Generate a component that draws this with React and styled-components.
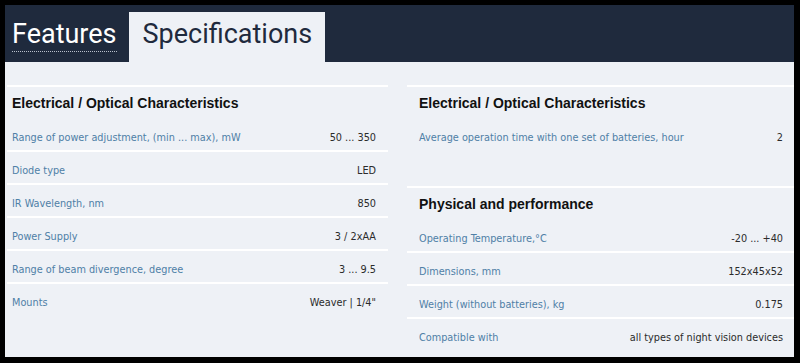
import React from 'react';
import styled, { createGlobalStyle } from 'styled-components';

const GlobalStyle = createGlobalStyle`
  body {
    margin: 0;
    background: #000000;
  }
`;

const Frame = styled.div`
  width: 800px;
  height: 363px;
  box-sizing: border-box;
  padding: 5px 6px 6px 5px;
  background: #000000;
`;

const Panel = styled.div`
  height: 100%;
  display: flex;
  flex-direction: column;
  background: #eef1f6;
  overflow: hidden;
`;

const TabBar = styled.div`
  height: 57px;
  flex-shrink: 0;
  display: flex;
  align-items: flex-end;
  gap: 12px;
  padding-left: 7px;
  background: #1f2a3d;
  font-family: Roboto, 'Liberation Sans', sans-serif;
  font-size: 27px;
`;

const PlainTab = styled.div`
  align-self: flex-start;
  margin-top: 13px;
  line-height: 32px;
  padding-bottom: 1px;
  color: #ffffff;
  border-bottom: 1px dotted #b9c1cd;
`;

const ActiveTab = styled.div`
  height: 50px;
  box-sizing: border-box;
  padding: 6px 13px 0 14px;
  line-height: 32px;
  color: #1f2a3d;
  background: #eef1f6;
`;

const Content = styled.div`
  display: grid;
  grid-template-columns: 381px 387px;
  column-gap: 19px;
  padding: 23px 0 0 2px;
  align-items: start;
`;

const Column = styled.div`
  display: flex;
  flex-direction: column;
  gap: 34px;
`;

const Section = styled.div`
  border-top: 2px solid #ffffff;
`;

const SectionTitle = styled.div`
  height: 32px;
  display: flex;
  align-items: center;
  padding-left: ${({ $inset }) => $inset}px;
  font-family: 'Liberation Sans', Arial, sans-serif;
  font-weight: bold;
  font-size: 14px;
  color: #111111;
`;

const Row = styled.div`
  height: 33px;
  box-sizing: border-box;
  display: flex;
  align-items: center;
  justify-content: space-between;
  padding: 5px ${({ $end }) => $end}px 0 ${({ $inset }) => $inset}px;
  border-bottom: 2px solid #ffffff;
  font-family: 'DejaVu Sans Condensed', 'DejaVu Sans', sans-serif;
  font-size: 10.8px;

  &:last-child {
    border-bottom-color: transparent;
  }
`;

const Label = styled.span`
  color: #4f80a6;
`;

const Value = styled.span`
  color: #2b2b2b;
`;

const leftSections = [
  {
    title: 'Electrical / Optical Characteristics',
    rows: [
      ['Range of power adjustment, (min ... max), mW', '50 ... 350'],
      ['Diode type', 'LED'],
      ['IR Wavelength, nm', '850'],
      ['Power Supply', '3 / 2xAA'],
      ['Range of beam divergence, degree', '3 ... 9.5'],
      ['Mounts', 'Weaver | 1/4"'],
    ],
  },
];

const rightSections = [
  {
    title: 'Electrical / Optical Characteristics',
    rows: [['Average operation time with one set of batteries, hour', '2']],
  },
  {
    title: 'Physical and performance',
    rows: [
      ['Operating Temperature,°C', '-20 ... +40'],
      ['Dimensions, mm', '152x45x52'],
      ['Weight (without batteries), kg', '0.175'],
      ['Compatible with', 'all types of night vision devices'],
    ],
  },
];

const SpecColumn = ({ sections, inset, end }) => (
  <Column>
    {sections.map((section) => (
      <Section key={section.title}>
        <SectionTitle $inset={inset}>{section.title}</SectionTitle>
        {section.rows.map(([label, value]) => (
          <Row key={label} $inset={inset} $end={end}>
            <Label>{label}</Label>
            <Value>{value}</Value>
          </Row>
        ))}
      </Section>
    ))}
  </Column>
);

const App = () => (
  <>
    <GlobalStyle />
    <Frame>
      <Panel>
        <TabBar>
          <PlainTab>Features</PlainTab>
          <ActiveTab>Specifications</ActiveTab>
        </TabBar>
        <Content>
          <SpecColumn sections={leftSections} inset={5} end={12} />
          <SpecColumn sections={rightSections} inset={12} end={11} />
        </Content>
      </Panel>
    </Frame>
  </>
);

export default App;
